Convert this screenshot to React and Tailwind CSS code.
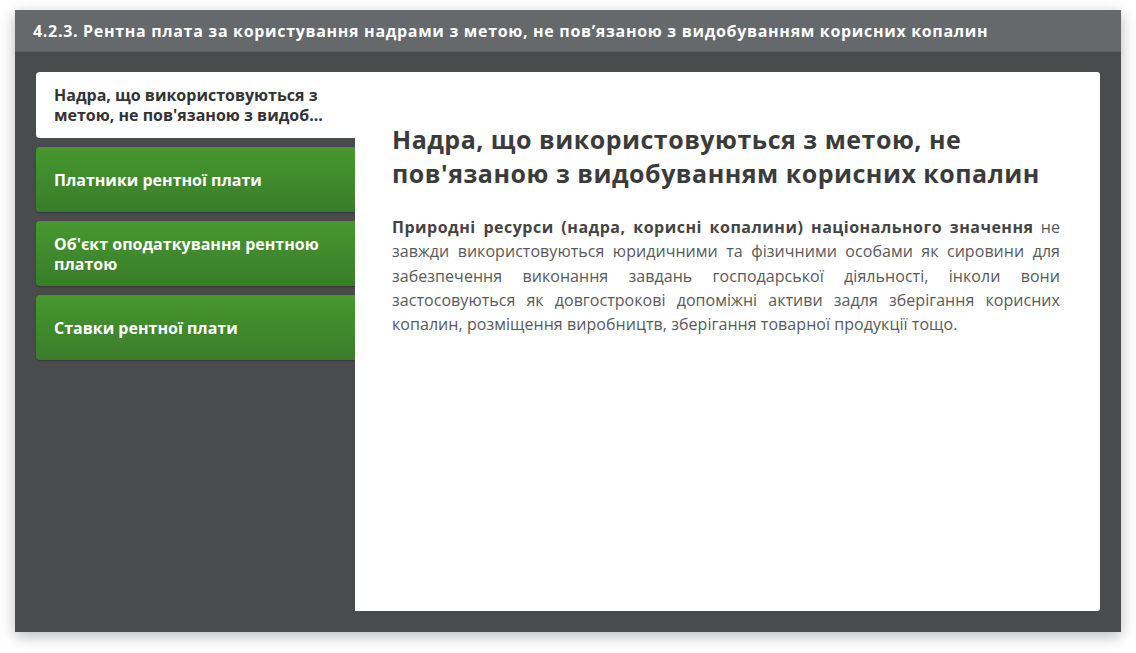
export default function App() {
  const tabs = [
    'Платники рентної плати',
    "Об'єкт оподаткування рентною платою",
    'Ставки рентної плати',
  ];

  return (
    <div className="w-[1136px] h-[653px] bg-white pt-[10px] pl-[15px]" style={{ fontFamily: '"Open Sans", "Noto Sans", sans-serif' }}>
      <div className="w-[1106px] h-[622px] flex flex-col bg-[#4a4b4d] shadow-[0_4px_14px_rgba(0,0,0,0.28)]">
        {/* шапка */}
        <div className="h-[42px] shrink-0 bg-[#66696b] flex items-center px-[18px] border-b border-[#5a5c5e]">
          <h1 className="text-white text-[16px] font-bold tracking-[0.68px] whitespace-nowrap">
            4.2.3. Рентна плата за користування надрами з метою, не пов’язаною з видобуванням корисних копалин
          </h1>
        </div>

        {/* тіло */}
        <div className="flex flex-1 pt-[20px] pl-[21px] pr-[21px] pb-[21px]">
          <div className="w-[319px] shrink-0 flex flex-col gap-[9px]">
            <div className="h-[66px] bg-white rounded-l-[4px] pl-[18px] pr-[16px] flex items-center">
              <p className="text-[#333] text-[16px] font-bold leading-[20px]">
                Надра, що використовуються з метою, не пов'язаною з видоб...
              </p>
            </div>
            {tabs.map((t) => (
              <div
                key={t}
                className="h-[65px] rounded-l-[4px] pl-[18px] pr-[16px] flex items-center bg-gradient-to-b from-[#46982f] to-[#3a7c2a] shadow-[0_1px_2px_rgba(0,0,0,0.3)]"
              >
                <p className="text-white text-[16px] font-bold leading-[20px]">{t}</p>
              </div>
            ))}
          </div>

          <div className="flex-1 bg-white rounded-r-[3px] pt-[50px] pl-[37px] pr-[40px]">
            <h2 className="text-[#3b3b3b] text-[25px] font-bold leading-[34px] tracking-[0.5px] mb-[25px]">
              Надра, що використовуються з метою, не пов'язаною з видобуванням корисних копалин
            </h2>
            <p className="text-[#5a5a5a] text-[16px] leading-[24.3px] tracking-[0.05px] text-justify">
              <b className="text-[#444] font-bold tracking-[0.5px]">Природні ресурси (надра, корисні копалини) національного значення</b>{' '}
              не завжди використовуються юридичними та фізичними особами як сировини для забезпечення виконання завдань
              господарської діяльності, інколи вони застосовуються як довгострокові допоміжні активи задля зберігання
              корисних копалин, розміщення виробництв, зберігання товарної продукції тощо.
            </p>
          </div>
        </div>
      </div>
    </div>
  );
}
